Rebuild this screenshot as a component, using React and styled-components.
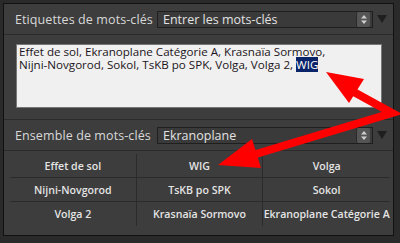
import React from 'react'
import styled, { createGlobalStyle } from 'styled-components'

const Global = createGlobalStyle`
  html, body { margin: 0; padding: 0; background: #2a2a2a; }
  body { font-family: "Open Sans", "DejaVu Sans", sans-serif; }
`

const Frame = styled.div`
  position: relative;
  width: 400px;
  height: 243px;
  box-sizing: border-box;
  padding: 3px 6px 7px 3px;
  background: #2a2a2a;
  overflow: hidden;
`
const Panel = styled.div`
  height: 100%;
  box-sizing: border-box;
  border: 1px solid #111;
  background: #3d3d3d;
  display: flex;
  flex-direction: column;
`
const Header = styled.div`
  height: 30px;
  flex: none;
  display: flex;
  align-items: center;
  padding-left: 11px;
  border-bottom: 1px solid #2b2b2b;
`
const Label = styled.div`
  width: 142px;
  color: #d8d8d8;
  font-size: 12.5px;
  letter-spacing: 0.1px;
  white-space: nowrap;
`
const Select = styled.div`
  width: 216px;
  height: 17px;
  box-sizing: border-box;
  border: 1px solid #1f1f1f;
  background: #3a3a3a;
  display: flex;
  align-items: center;
  padding-left: 5px;
  color: #e2e2e2;
  font-size: 12.5px;
`
const SelectText = styled.span`
  flex: 1;
  line-height: 15px;
`
const Stepper = styled.div`
  width: 14px;
  height: 15px;
  box-sizing: border-box;
  border-left: 1px solid #2a2a2a;
  border-radius: 2px;
  background: #555;
  display: flex;
  align-items: center;
  justify-content: center;
  margin-right: 2px;
`
const Toggle = styled.div`
  margin-left: 4px;
  width: 0;
  height: 0;
  border-left: 5px solid transparent;
  border-right: 5px solid transparent;
  border-top: 8px solid #1f1f1f;
`
const Body = styled.div`
  flex: none;
  padding: 9px 11px 11px 12px;
  border-bottom: 1px solid #2b2b2b;
`
const TextBox = styled.div`
  width: 366px;
  height: 64px;
  box-sizing: border-box;
  border: 1px solid #777;
  background: #f0f0f0;
  padding: 1px 2px;
  color: #1c1420;
  font-size: 11.6px;
  line-height: 12.6px;
`
const Line = styled.div`
  white-space: nowrap;
`
const Sel = styled.span`
  background: #0a246a;
  color: #fff;
`
const Grid = styled.div`
  margin: 3px 3px 0 6px;
  display: grid;
  grid-template-columns: repeat(3, 1fr);
  grid-auto-rows: 24px;
`
const Cell = styled.div`
  display: flex;
  align-items: center;
  justify-content: center;
  color: #e4e4e4;
  font-size: 10.6px;
  font-weight: 600;
  white-space: nowrap;
  border-bottom: ${p => (p.$last ? 'none' : '1px solid #2b2b2b')};
  border-right: ${p => (p.$end ? 'none' : '1px solid #2b2b2b')};
`
const Overlay = styled.svg`
  position: absolute;
  left: 0;
  top: 0;
  pointer-events: none;
`

const StepIcon = () => (
  <svg width="8" height="11" viewBox="0 0 8 11">
    <path d="M4 1 L7 4.5 L1 4.5 Z M4 10 L7 6.5 L1 6.5 Z" fill="#cfcfcf" />
  </svg>
)

const DropHeader = ({ label, value }) => (
  <Header>
    <Label>{label}</Label>
    <Select>
      <SelectText>{value}</SelectText>
      <Stepper><StepIcon /></Stepper>
    </Select>
    <Toggle />
  </Header>
)

const words = [
  'Effet de sol', 'WIG', 'Volga',
  'Nijni-Novgorod', 'TsKB po SPK', 'Sokol',
  'Volga 2', 'Krasnaïa Sormovo', 'Ekranoplane Catégorie A',
]

export default function App() {
  return (
    <Frame>
      <Global />
      <Panel>
        <DropHeader label="Etiquettes de mots-clés" value="Entrer les mots-clés" />
        <Body>
          <TextBox>
            <Line>Effet de sol, Ekranoplane Catégorie A, Krasnaïa Sormovo,</Line>
            <Line>Nijni-Novgorod, Sokol, TsKB po SPK, Volga, Volga 2, <Sel>WIG</Sel></Line>
          </TextBox>
        </Body>
        <DropHeader label="Ensemble de mots-clés" value="Ekranoplane" />
        <Grid>
          {words.map((w, i) => (
            <Cell key={w} $end={i % 3 === 2} $last={i >= 6}>{w}</Cell>
          ))}
        </Grid>
      </Panel>
      <Overlay width="400" height="243" viewBox="0 0 400 243">
        <polyline points="352,91 392,113 256,154" fill="none" stroke="#f00" strokeWidth="8" strokeLinejoin="miter" />
        <polygon points="326,72 364,79 349,103" fill="#f00" />
        <polygon points="218,165 252,139 261,168" fill="#f00" />
      </Overlay>
    </Frame>
  )
}
